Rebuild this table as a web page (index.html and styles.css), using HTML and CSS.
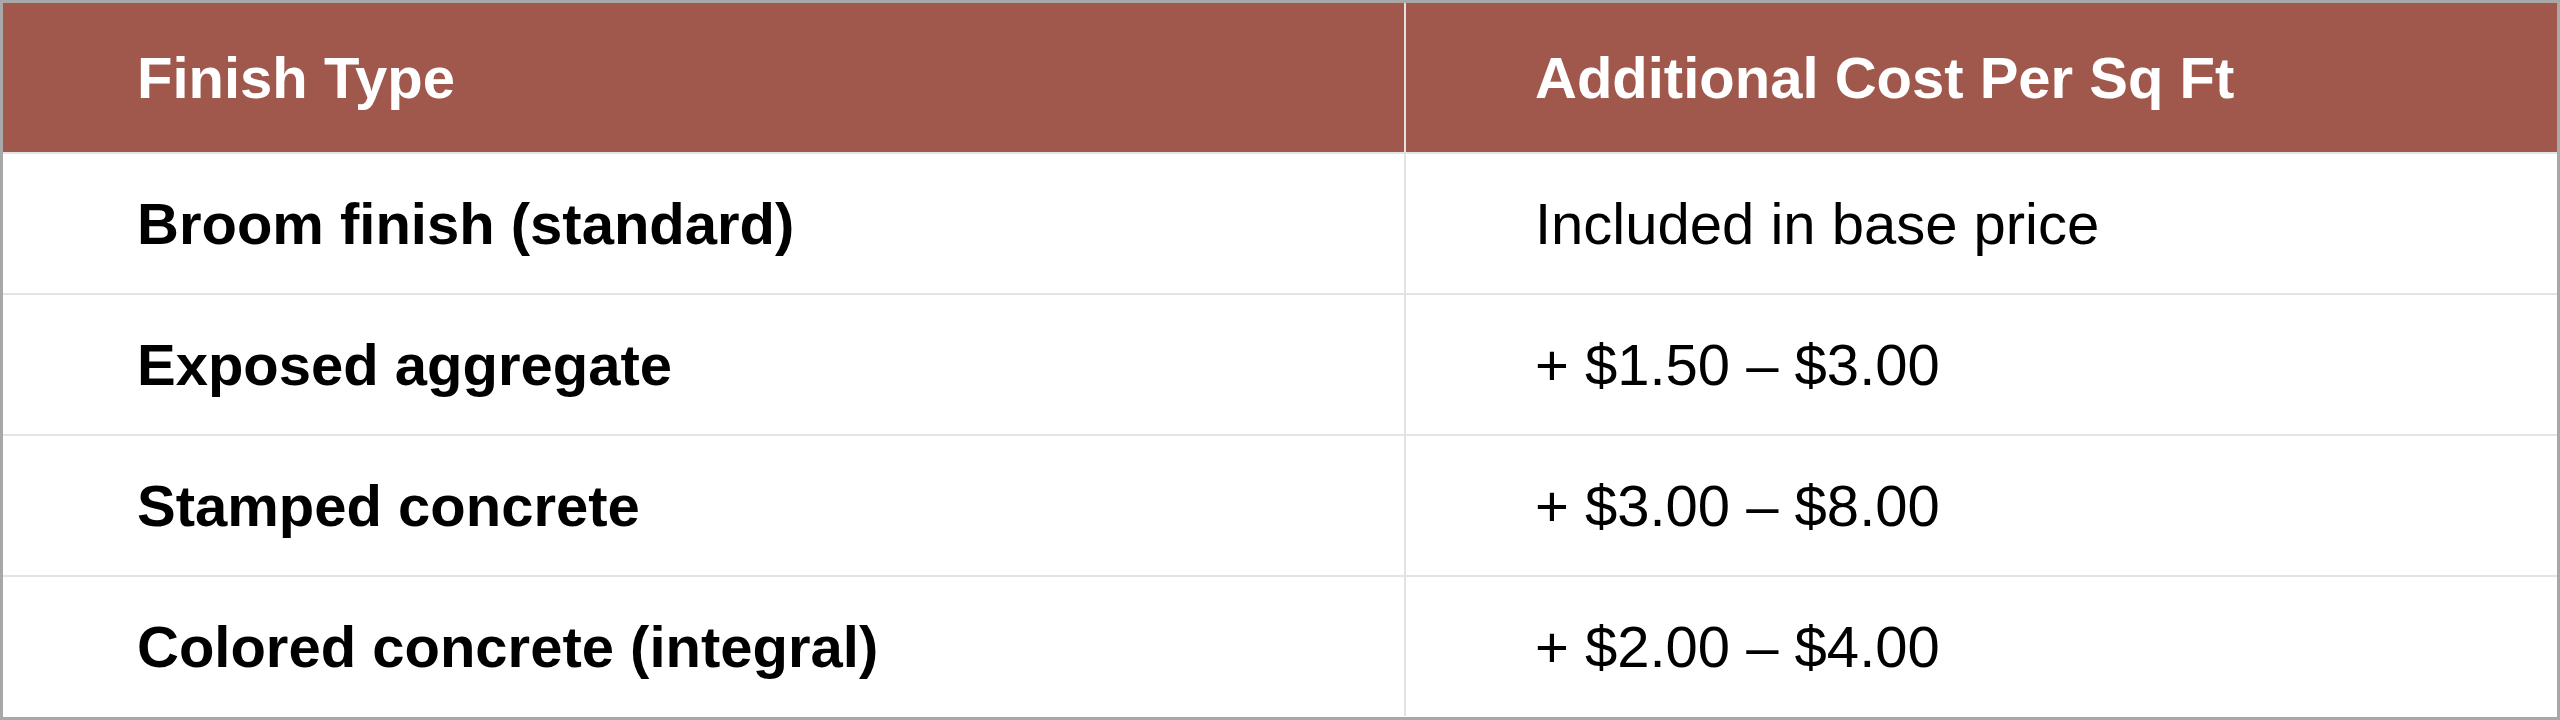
FILE: index.html
```
<!DOCTYPE html>
<html>
<head>
<meta charset="utf-8">
<link rel="stylesheet" href="styles.css">
</head>
<body>
<div class="frame">
  <table class="cost-table">
    <thead>
      <tr>
        <th class="col-type">Finish Type</th>
        <th class="col-cost">Additional Cost Per Sq Ft</th>
      </tr>
    </thead>
    <tbody>
      <tr>
        <td class="name">Broom finish (standard)</td>
        <td>Included in base price</td>
      </tr>
      <tr>
        <td class="name">Exposed aggregate</td>
        <td>+ $1.50 – $3.00</td>
      </tr>
      <tr>
        <td class="name">Stamped concrete</td>
        <td>+ $3.00 – $8.00</td>
      </tr>
      <tr>
        <td class="name">Colored concrete (integral)</td>
        <td>+ $2.00 – $4.00</td>
      </tr>
    </tbody>
  </table>
</div>
</body>
</html>
```
FILE: styles.css
```
html, body {
  margin: 0;
  padding: 0;
  background: #ffffff;
}
.frame {
  width: 2560px;
  height: 720px;
  box-sizing: border-box;
  border: 3px solid #a8a8a8;
  background: #ffffff;
}
.cost-table {
  width: 100%;
  border-collapse: collapse;
  table-layout: fixed;
  font-family: "Liberation Sans", Arial, sans-serif;
  font-size: 58px;
  color: #000000;
}
.cost-table th,
.cost-table td {
  text-align: left;
  padding: 0 0 0 134px;
  border-left: 2px solid #e2e2e2;
  border-top: 2px solid #e4e4e4;
  white-space: nowrap;
}
.cost-table th:first-child,
.cost-table td:first-child {
  border-left: none;
}
.cost-table thead th {
  border-top: none;
  background: #a0574c;
  color: #ffffff;
  font-weight: 700;
  height: 149px;
}
.cost-table .col-type {
  width: 1267px;
}
.cost-table .col-cost {
  padding-left: 129px;
}
.cost-table tbody td {
  height: 139px;
  font-weight: 400;
}
.cost-table tbody td + td {
  padding-left: 129px;
}
.cost-table td.name {
  font-weight: 700;
}
```
